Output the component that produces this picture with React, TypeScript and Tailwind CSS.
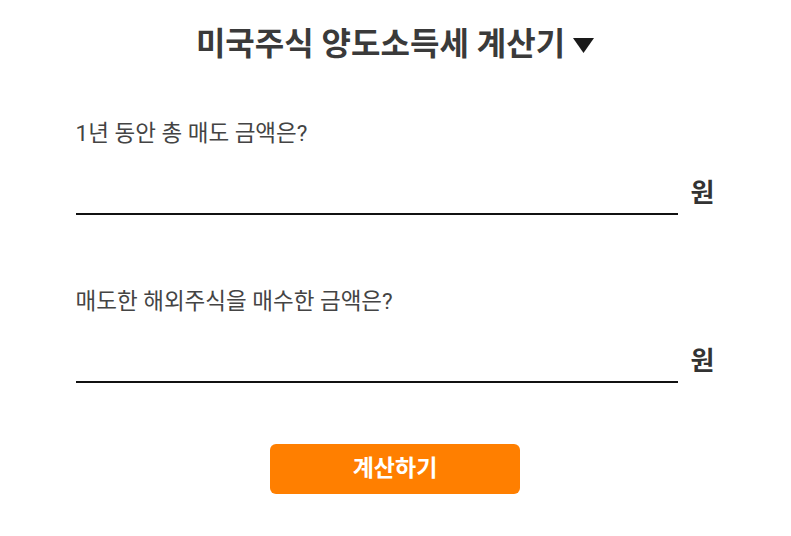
import React from "react";

const font = { fontFamily: "Roboto, 'Noto Sans CJK KR', sans-serif" };

function AmountField({ label }: { label: string }) {
  return (
    <div className="flex flex-col">
      <label className="text-[22.5px] leading-[32px] text-[#444]">{label}</label>
      <div className="mt-[22px] flex items-end gap-[13px]">
        <input
          type="text"
          className="h-[44px] flex-1 border-b-2 border-[#111] bg-transparent text-right text-[22px] outline-none"
        />
        <span className="pb-[7px] text-[26px] font-bold leading-[30px] text-[#333]">원</span>
      </div>
    </div>
  );
}

export default function App() {
  return (
    <div className="flex min-h-[536px] w-full justify-center bg-white" style={font}>
      <div className="ml-[-1px] flex w-[639px] flex-col pt-[22px]">
        <h1 className="flex items-center justify-center gap-[8px] text-[32px] font-bold leading-[44px] text-[#3a3a3a]">
          미국주식 양도소득세 계산기
          <svg width="21" height="15" viewBox="0 0 21 15" className="mt-[2px]">
            <path d="M0 0 H21 L10.5 15 Z" fill="#1a1a1a" />
          </svg>
        </h1>

        <div className="mt-[51px] flex flex-col gap-[70px]">
          <AmountField label="1년 동안 총 매도 금액은?" />
          <AmountField label="매도한 해외주식을 매수한 금액은?" />
        </div>

        <div className="mt-[61px] flex justify-center">
          <button className="h-[50px] w-[250px] rounded-[6px] bg-[#ff7f00] text-[23px] font-bold text-white">
            계산하기
          </button>
        </div>
      </div>
    </div>
  );
}
